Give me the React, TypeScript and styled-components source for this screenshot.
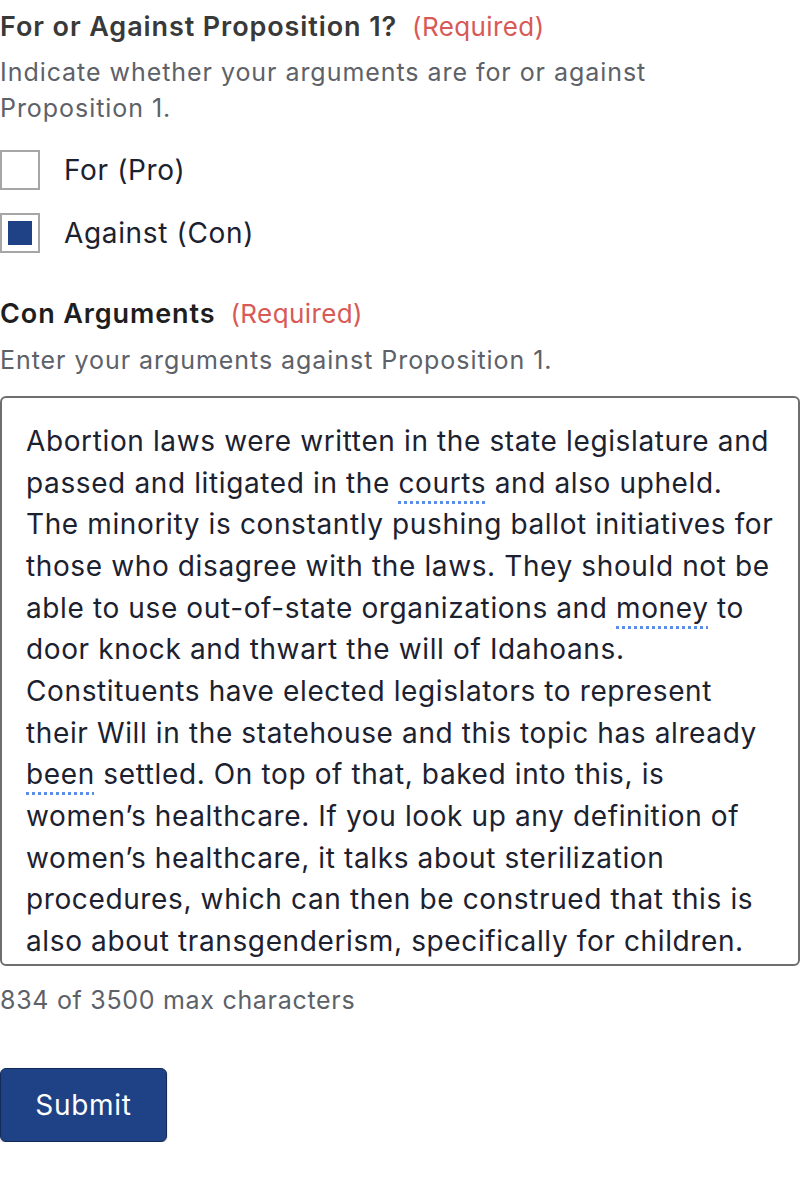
import React, { useState } from 'react';
import styled, { createGlobalStyle } from 'styled-components';

const GlobalStyle = createGlobalStyle`
    body {
        margin: 0;
        background: #ffffff;
        font-family: Inter, "Open Sans", sans-serif;
    }
`;

const FormContainer = styled.form`
    display: flex;
    flex-direction: column;
    align-items: flex-start;
    width: 800px;
`;

const FieldLabel = styled.div<{ $top: number; $color: string }>`
    margin-top: ${({ $top }) => $top}px;
    font-size: 27px;
    line-height: 36px;
    font-weight: 600;
    letter-spacing: 0.9px;
    color: ${({ $color }) => $color};
    white-space: nowrap;
`;

const Required = styled.span`
    margin-left: 15px;
    font-size: 26px;
    font-weight: 400;
    color: #d75a57;
    letter-spacing: 0.4px;
`;

const Description = styled.div<{ $top: number }>`
    margin-top: ${({ $top }) => $top}px;
    font-size: 25px;
    line-height: 36px;
    letter-spacing: 0.95px;
    color: #5d6168;
    width: 700px;
`;

const ChoiceList = styled.div`
    display: flex;
    flex-direction: column;
    gap: 23px;
    margin-top: 24px;
`;

const ChoiceRow = styled.label`
    display: flex;
    align-items: center;
    gap: 24px;
    cursor: pointer;
`;

const CheckBox = styled.span<{ $checked: boolean }>`
    box-sizing: border-box;
    width: 40px;
    height: 40px;
    border: 2px solid #a6a6a6;
    display: flex;
    align-items: center;
    justify-content: center;
    background: #ffffff;

    &::after {
        content: '';
        width: 24px;
        height: 24px;
        background: ${({ $checked }) => ($checked ? '#1f4286' : 'transparent')};
    }
`;

const ChoiceText = styled.span`
    font-size: 28px;
    line-height: 40px;
    letter-spacing: 0.65px;
    color: #1c2130;
`;

const TextBox = styled.div`
    box-sizing: border-box;
    margin-top: 18px;
    width: 800px;
    height: 570px;
    border: 2px solid #6e6e6e;
    border-radius: 6px;
    padding: 23px 24px 0 24px;
    overflow: hidden;
    font-size: 28px;
    line-height: 41.67px;
    letter-spacing: 0.62px;
    color: #1c2130;
`;

const TextLine = styled.div`
    white-space: nowrap;
`;

const Misspelled = styled.span`
    text-decoration: underline dotted #5a8ee8;
    text-decoration-thickness: 2.5px;
    text-underline-offset: 8px;
`;

const CharCount = styled.div`
    margin-top: 17px;
    font-size: 25px;
    line-height: 34px;
    letter-spacing: 0.7px;
    color: #5d6168;
`;

const SubmitButton = styled.button`
    box-sizing: border-box;
    margin-top: 51px;
    width: 167px;
    height: 74px;
    border: 1px solid #132b58;
    border-radius: 6px;
    background: #1f4286;
    color: #ffffff;
    font-family: Inter, "Open Sans", sans-serif;
    font-size: 28px;
    letter-spacing: 0.7px;
    cursor: pointer;
    box-shadow: 0 1px 2px rgba(0, 0, 0, 0.25);
`;

// each line as shown in the box, misspelled words marked with *
const argumentLines = [
    'Abortion laws were written in the state legislature and',
    'passed and litigated in the *courts* and also upheld.',
    'The minority is constantly pushing ballot initiatives for',
    'those who disagree with the laws. They should not be',
    'able to use out-of-state organizations and *money* to',
    'door knock and thwart the will of Idahoans.',
    'Constituents have elected legislators to represent',
    'their Will in the statehouse and this topic has already',
    '*been* settled. On top of that, baked into this, is',
    'women’s healthcare. If you look up any definition of',
    'women’s healthcare, it talks about sterilization',
    'procedures, which can then be construed that this is',
    'also about transgenderism, specifically for children.',
];

function renderLine(line: string) {
    return line.split('*').map((part, i) => (i % 2 === 1 ? <Misspelled key={i}>{part}</Misspelled> : <React.Fragment key={i}>{part}</React.Fragment>));
}

export default function App() {
    const [stance, setStance] = useState<'pro' | 'con'>('con');

    return (
        <FormContainer onSubmit={(e) => e.preventDefault()}>
            <GlobalStyle />
            <FieldLabel $top={9} $color="#393939">
                For or Against Proposition 1?
                <Required>(Required)</Required>
            </FieldLabel>
            <Description $top={9}>Indicate whether your arguments are for or against Proposition 1.</Description>

            <ChoiceList>
                <ChoiceRow onClick={() => setStance('pro')}>
                    <CheckBox $checked={stance === 'pro'} />
                    <ChoiceText>For (Pro)</ChoiceText>
                </ChoiceRow>
                <ChoiceRow onClick={() => setStance('con')}>
                    <CheckBox $checked={stance === 'con'} />
                    <ChoiceText>Against (Con)</ChoiceText>
                </ChoiceRow>
            </ChoiceList>

            <FieldLabel $top={43} $color="#1e1e1e">
                Con Arguments
                <Required>(Required)</Required>
            </FieldLabel>
            <Description $top={10}>Enter your arguments against Proposition 1.</Description>

            <TextBox role="textbox" aria-multiline="true">
                {argumentLines.map((line) => (
                    <TextLine key={line}>{renderLine(line)}</TextLine>
                ))}
            </TextBox>
            <CharCount>834 of 3500 max characters</CharCount>

            <SubmitButton type="submit">Submit</SubmitButton>
        </FormContainer>
    );
}
